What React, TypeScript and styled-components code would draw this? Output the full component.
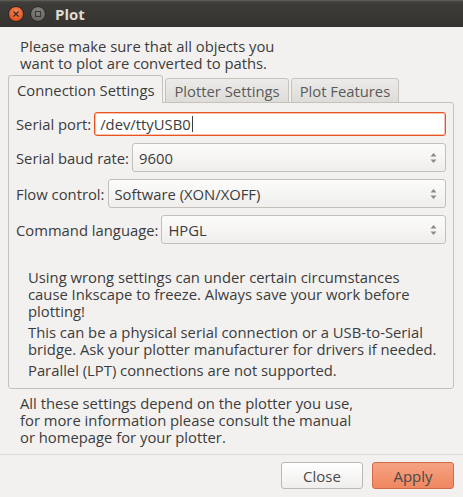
import styled, { createGlobalStyle } from "styled-components";

const GlobalStyle = createGlobalStyle`
  html, body {
    margin: 0;
    padding: 0;
    background: #f2f1f0;
  }
  body {
    font-family: "Open Sans", "Lato", "DejaVu Sans", sans-serif;
    font-size: 14.8px;
    color: #3c3c3c;
  }
`;

const Window = styled.div`
  width: 463px;
  height: 497px;
  display: flex;
  flex-direction: column;
  background: #f2f1f0;
  overflow: hidden;
`;

const TitleBar = styled.div`
  height: 27px;
  display: flex;
  align-items: center;
  gap: 6px;
  padding-left: 8px;
  background: linear-gradient(#4a4944 0px, #3d3c38 2px, #34332f 100%);
  border-top: 1px solid #5a5954;
  box-sizing: border-box;
`;

const WinButton = styled.div<{ $kind: "close" | "min" }>`
  width: 14px;
  height: 14px;
  border-radius: 50%;
  display: flex;
  align-items: center;
  justify-content: center;
  background: ${(p) =>
    p.$kind === "close"
      ? "radial-gradient(circle at 50% 35%, #f48a5c, #e5541e 70%, #c9471a)"
      : "radial-gradient(circle at 50% 35%, #8a8984, #6a6964 70%, #55544f)"};
  border: 1px solid #2a2926;
`;

const Title = styled.span`
  margin-left: 3px;
  font-weight: bold;
  font-size: 15px;
  color: #dfdbd2;
`;

const Intro = styled.p`
  margin: 11px 0 4px 20px;
  line-height: 17px;
`;

const Notebook = styled.div`
  margin: 0 9px 0 8px;
  display: flex;
  flex-direction: column;
`;

const TabStrip = styled.div`
  display: flex;
  align-items: flex-end;
  gap: 2px;
  height: 27px;
  margin-bottom: -1px;
  position: relative;
  z-index: 1;
`;

const Tab = styled.div<{ $active?: boolean }>`
  box-sizing: border-box;
  height: ${(p) => (p.$active ? "28px" : "25px")};
  padding: 0 8px;
  display: flex;
  align-items: center;
  border: 1px solid #c6c3bd;
  border-bottom: ${(p) => (p.$active ? "none" : "1px solid #c6c3bd")};
  border-radius: 3px 3px 0 0;
  background: ${(p) =>
    p.$active ? "#f2f1f0" : "linear-gradient(#ecebe9, #dedcd8)"};
  color: ${(p) => (p.$active ? "#3c3c3c" : "#5a5a5a")};
  white-space: nowrap;
`;

const Panel = styled.div`
  border: 1px solid #c6c3bd;
  border-radius: 0 3px 3px 3px;
  padding: 9px 7px 9px 7px;
  height: 287px;
  box-sizing: border-box;
  display: flex;
  flex-direction: column;
`;

const Row = styled.div`
  display: flex;
  align-items: center;
  gap: 3px;
  margin-bottom: 7px;
`;

const Label = styled.span`
  white-space: nowrap;
`;

const Entry = styled.div`
  flex: 1;
  height: 24px;
  box-sizing: border-box;
  border: 1px solid #e95420;
  border-radius: 3px;
  background: #ffffff;
  display: flex;
  align-items: center;
  padding-left: 5px;
  box-shadow: inset 0 0 0 1px #f6c2ae;
`;

const Caret = styled.span`
  display: inline-block;
  width: 1px;
  height: 16px;
  background: #3c3c3c;
  margin-left: 1px;
`;

const Combo = styled.div`
  flex: 1;
  height: 29px;
  box-sizing: border-box;
  border: 1px solid #c3c0ba;
  border-radius: 3px;
  background: linear-gradient(#fcfcfb, #efeeec);
  display: flex;
  align-items: center;
  justify-content: space-between;
  padding: 0 8px 0 6px;
`;

const Arrows = styled.svg`
  width: 7px;
  height: 12px;
`;

const Info = styled.div`
  margin: auto 0 0 12px;
  display: flex;
  flex-direction: column;
  gap: 4px;
`;

const Para = styled.p`
  margin: 0;
  line-height: 17px;
`;

const Footer = styled.p`
  margin: 6px 0 0 20px;
  line-height: 17px;
`;

const Separator = styled.div`
  height: 1px;
  background: #dcdad6;
  margin-top: 8px;
`;

const ButtonBar = styled.div`
  display: flex;
  justify-content: flex-end;
  gap: 9px;
  padding: 7px 9px 0 0;
`;

const Button = styled.button<{ $suggested?: boolean }>`
  width: 82px;
  height: 27px;
  border-radius: 3px;
  font: inherit;
  font-size: 15px;
  color: #4a4a4a;
  border: 1px solid ${(p) => (p.$suggested ? "#cf6c47" : "#bcb9b3")};
  background: ${(p) =>
    p.$suggested
      ? "linear-gradient(#f6a283, #ef875f)"
      : "linear-gradient(#ffffff, #efeeec)"};
`;

const ComboArrows = () => (
  <Arrows viewBox="0 0 7 12">
    <path d="M3.5 1 L6.5 4.5 L0.5 4.5 Z" fill="#8a8a8a" />
    <path d="M3.5 11 L6.5 7.5 L0.5 7.5 Z" fill="#8a8a8a" />
  </Arrows>
);

const fields = [
  { label: "Serial baud rate:", value: "9600" },
  { label: "Flow control:", value: "Software (XON/XOFF)" },
  { label: "Command language:", value: "HPGL" },
];

export default function App() {
  return (
    <Window>
      <GlobalStyle />
      <TitleBar>
        <WinButton $kind="close">
          <svg width="8" height="8" viewBox="0 0 8 8">
            <path d="M1.5 1.5 L6.5 6.5 M6.5 1.5 L1.5 6.5" stroke="#3a2a22" strokeWidth="1.4" />
          </svg>
        </WinButton>
        <WinButton $kind="min">
          <svg width="8" height="8" viewBox="0 0 8 8">
            <rect x="1.5" y="1.5" width="5" height="5" fill="none" stroke="#3a3935" strokeWidth="1.2" />
          </svg>
        </WinButton>
        <Title>Plot</Title>
      </TitleBar>

      <Intro>
        Please make sure that all objects you
        <br />
        want to plot are converted to paths.
      </Intro>

      <Notebook>
        <TabStrip>
          <Tab $active>Connection Settings</Tab>
          <Tab>Plotter Settings</Tab>
          <Tab>Plot Features</Tab>
        </TabStrip>
        <Panel>
          <Row>
            <Label>Serial port:</Label>
            <Entry>
              /dev/ttyUSB0
              <Caret />
            </Entry>
          </Row>
          {fields.map((f) => (
            <Row key={f.label}>
              <Label>{f.label}</Label>
              <Combo>
                <span>{f.value}</span>
                <ComboArrows />
              </Combo>
            </Row>
          ))}
          <Info>
            <Para>
              Using wrong settings can under certain circumstances
              <br />
              cause Inkscape to freeze. Always save your work before
              <br />
              plotting!
            </Para>
            <Para>
              This can be a physical serial connection or a USB-to-Serial
              <br />
              bridge. Ask your plotter manufacturer for drivers if needed.
            </Para>
            <Para>Parallel (LPT) connections are not supported.</Para>
          </Info>
        </Panel>
      </Notebook>

      <Footer>
        All these settings depend on the plotter you use,
        <br />
        for more information please consult the manual
        <br />
        or homepage for your plotter.
      </Footer>

      <Separator />
      <ButtonBar>
        <Button>Close</Button>
        <Button $suggested>Apply</Button>
      </ButtonBar>
    </Window>
  );
}
